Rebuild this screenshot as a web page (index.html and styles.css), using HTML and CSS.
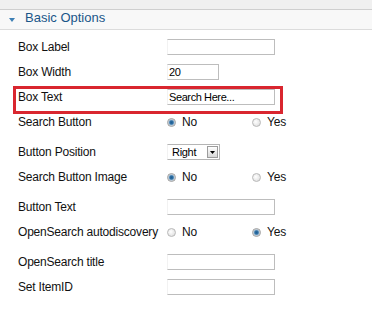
FILE: index.html
```html
<!DOCTYPE html>
<html lang="en">
<head>
  <meta charset="UTF-8" />
  <title>Basic Options</title>
  <link rel="stylesheet" href="styles.css">
</head>
<body>
  <div class="topbar"></div>
  <div class="panel-head"><span class="caret"></span>Basic Options</div>
  <div class="options">
    <div class="row">
      <label class="key" for="boxLabel">Box Label</label>
      <input class="field" type="text" id="boxLabel" />
    </div>
    <div class="row">
      <label class="key" for="boxWidth">Box Width</label>
      <input class="field short" type="text" id="boxWidth" value="20" />
    </div>
    <div class="row marked">
      <label class="key" for="boxText">Box Text</label>
      <input class="field" type="text" id="boxText" value="Search Here..." />
    </div>
    <div class="row radio">
      <span class="key">Search Button</span>
      <label class="opt"><input type="radio" name="searchBtn" checked />No</label>
      <label class="opt"><input type="radio" name="searchBtn" />Yes</label>
    </div>
    <div class="row">
      <label class="key" for="btnPos">Button Position</label>
      <span class="pick">
        <select id="btnPos">
          <option>Right</option>
          <option>Left</option>
        </select>
        <span class="drop"><svg width="5" height="3" viewBox="0 0 5 3"><path d="M0 0h5L2.5 3z" fill="#000"/></svg></span>
      </span>
    </div>
    <div class="row radio">
      <span class="key">Search Button Image</span>
      <label class="opt"><input type="radio" name="btnImage" checked />No</label>
      <label class="opt"><input type="radio" name="btnImage" />Yes</label>
    </div>
    <div class="row">
      <label class="key" for="btnText">Button Text</label>
      <input class="field" type="text" id="btnText" />
    </div>
    <div class="row radio">
      <span class="key">OpenSearch autodiscovery</span>
      <label class="opt"><input type="radio" name="autodisc" />No</label>
      <label class="opt"><input type="radio" name="autodisc" checked />Yes</label>
    </div>
    <div class="row">
      <label class="key" for="osTitle">OpenSearch title</label>
      <input class="field" type="text" id="osTitle" />
    </div>
    <div class="row">
      <label class="key" for="itemId">Set ItemID</label>
      <input class="field" type="text" id="itemId" />
    </div>
  </div>
</body>
</html>
```

FILE: styles.css
```css
body {
  margin: 0;
  background: #fff;
  font-family: "Liberation Sans", Arial, sans-serif;
  color: #111;
}

.topbar {
  height: 9px;
  background: #f0f0f0;
  border-bottom: 1px solid #cfcfcf;
}

.panel-head {
  display: flex;
  align-items: center;
  height: 16px;
  line-height: 16px;
  padding-bottom: 3px;
  background: #f8f8f8;
  border-bottom: 1px solid #dcdcdc;
  font-size: 13px;
  color: #1a5689;
}

.caret {
  width: 0;
  height: 0;
  margin: 4px 10px 0 9px;
  border-left: 3px solid transparent;
  border-right: 3px solid transparent;
  border-top: 4px solid #3d7fb5;
}

.options { padding-top: 8px; }

.row {
  display: flex;
  align-items: center;
  height: 18px;
  padding-left: 18px;
  margin-bottom: 7px;
  font-size: 12px;
  letter-spacing: -0.2px;
}
.row.radio { margin-bottom: 12px; }

.row.marked { position: relative; }
.row.marked::after {
  content: '';
  position: absolute;
  left: 13px;
  top: -2px;
  width: 270px;
  height: 28px;
  box-sizing: border-box;
  border: 3px solid #d9262f;
  pointer-events: none;
}

.key { width: 149px; flex-shrink: 0; }

.field {
  box-sizing: border-box;
  width: 108px;
  height: 16px;
  margin: 0;
  padding: 0 1px;
  border: 1px solid #bdbdbd;
  border-left-color: #f2f2f2;
  font-family: "Liberation Sans", Arial, sans-serif;
  font-size: 11px;
  letter-spacing: -0.4px;
  color: #000;
  outline: none;
}
.field.short { width: 52px; }

.opt {
  display: flex;
  align-items: center;
  width: 85px;
}
.opt input {
  appearance: none;
  width: 9px;
  height: 9px;
  margin: 0 6px 0 0;
  border: 1px solid #b8b8b8;
  border-radius: 50%;
  background: radial-gradient(circle at 40% 40%, #fff, #d8d8d8);
}
.opt input:checked {
  border-color: #a0a0a0;
  background: radial-gradient(circle, #1d5d93 0, #2f6fa3 1.6px, #8fb2cf 2.6px, #e0e0e0 3.4px, #f0f0f0);
}

.pick {
  position: relative;
  display: inline-block;
  height: 16px;
}
.pick select {
  appearance: none;
  box-sizing: border-box;
  width: 53px;
  height: 16px;
  margin: 0;
  padding: 0 0 0 4px;
  border: 1px solid #b5b5b5;
  border-left-color: #f2f2f2;
  border-radius: 0;
  background: #fff;
  font-family: "Liberation Sans", Arial, sans-serif;
  font-size: 11px;
  letter-spacing: -0.3px;
  color: #000;
}
.drop {
  position: absolute;
  top: 2px;
  right: 2px;
  width: 11px;
  height: 12px;
  box-sizing: border-box;
  border: 1px solid #9c9c9c;
  background: linear-gradient(#fff, #d8d8d8);
  display: flex;
  align-items: center;
  justify-content: center;
  pointer-events: none;
}
```
